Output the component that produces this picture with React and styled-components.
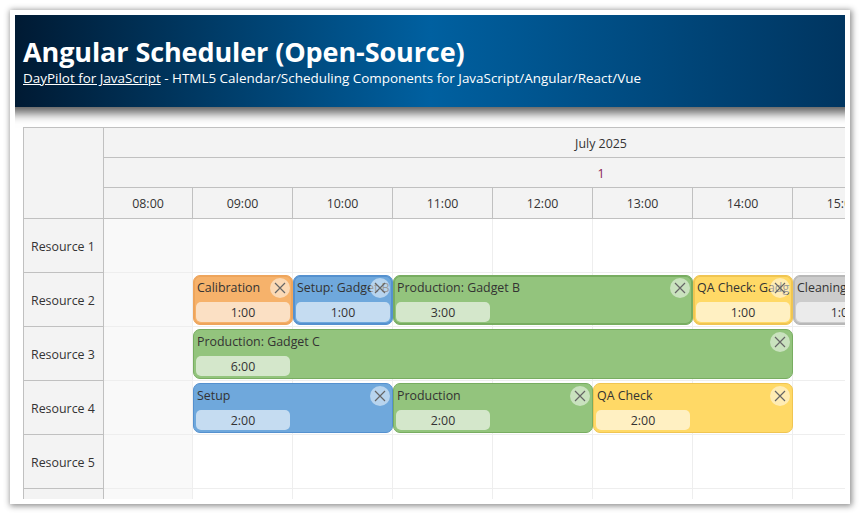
import React from "react";
import styled, { createGlobalStyle } from "styled-components";

const Global = createGlobalStyle`
  html, body { margin: 0; padding: 0; background: #fff; width: 860px; height: 514px; overflow: hidden; }
  * { box-sizing: border-box; }
`;

const Page = styled.div`
  width: 860px;
  height: 514px;
  padding: 10px;
  font-family: "Open Sans", "Noto Sans", "Liberation Sans", sans-serif;
`;

const Frame = styled.div`
  width: 840px;
  height: 494px;
  padding: 5px;
  background: #fff;
  box-shadow: 1px 1px 6px 1px rgba(0, 0, 0, 0.45);
`;

const Viewport = styled.div`
  width: 830px;
  height: 484px;
  overflow: hidden;
`;

const Header = styled.header`
  height: 92px;
  padding: 22px 8px 0;
  color: #fff;
  background: linear-gradient(90deg, #001a33 0%, #0060a0 50%, #003560 100%);
  box-shadow: 0 -4px 10px 10px rgba(0, 0, 0, 0.65);
`;

const Title = styled.h1`
  margin: 0;
  font-size: 27px;
  line-height: 30px;
  font-weight: 700;
  letter-spacing: -0.1px;
`;

const Subtitle = styled.div`
  margin-top: 2px;
  font-size: 13.45px;
  line-height: 18px;
  a { color: #fff; }
`;

const Scheduler = styled.div`
  margin: 20px 0 0 8px;
  width: 1075px;
  border-top: 1px solid #c0c0c0;
  border-left: 1px solid #c0c0c0;
  display: grid;
  grid-template-columns: 80px 1fr;
  font-size: 12.4px;
  color: #333;
`;

const Corner = styled.div`
  background: #f3f3f3;
  border-right: 1px solid #c0c0c0;
  border-bottom: 1px solid #c0c0c0;
`;

const TimeHeader = styled.div`
  display: grid;
  grid-template-rows: 30px 30px 31px;
`;

const HeaderBand = styled.div`
  display: flex;
  align-items: center;
  justify-content: center;
  padding-top: 2px;
  background: #f3f3f3;
  border-bottom: 1px solid #c0c0c0;
  color: ${(p) => p.$color || "#333"};
`;

const HourRow = styled.div`
  display: grid;
  grid-template-columns: 89px repeat(9, 100px);
`;

const HourCell = styled.div`
  display: flex;
  align-items: center;
  justify-content: center;
  background: #f3f3f3;
  border-right: 1px solid #c0c0c0;
  border-bottom: 1px solid #c0c0c0;
`;

const RowHeader = styled.div`
  height: 54px;
  display: flex;
  align-items: center;
  padding: 2px 0 0 7px;
  background: #f3f3f3;
  border-right: 1px solid #c0c0c0;
  border-bottom: 1px solid #c0c0c0;
`;

const Lane = styled.div`
  height: 54px;
  display: grid;
  grid-template-columns: 89px repeat(9, 100px);
  grid-template-rows: 54px;
`;

const Cell = styled.div`
  grid-row: 1;
  grid-column: ${(p) => p.$col};
  background: ${(p) => (p.$off ? "#f9f9f9" : "#fff")};
  border-right: 1px solid #eee;
  border-bottom: 1px solid #eee;
`;

const Event = styled.div`
  grid-row: 1;
  grid-column: ${(p) => p.$col} / span ${(p) => p.$span};
  position: relative;
  margin: 2px 0;
  padding: 3px 2px 0;
  z-index: 1;
  min-width: 0;
  border-radius: 7px;
  border: 1px solid ${(p) => p.$border};
  background: ${(p) => p.$bg};
  box-shadow: ${(p) => (p.$thick ? `inset 0 0 0 1px ${p.$border}` : "none")};
`;

const EventText = styled.div`
  height: 18px;
  line-height: 18px;
  white-space: nowrap;
  overflow: hidden;
  padding-left: 1px;
`;

const Bar = styled.div`
  width: 94px;
  height: 20px;
  margin-top: 5px;
  border-radius: 5px;
  background: rgba(255, 255, 255, 0.6);
  display: flex;
  align-items: center;
  justify-content: center;
`;

const Delete = styled.div`
  position: absolute;
  top: 2px;
  right: 2px;
  width: 20px;
  height: 20px;
  border-radius: 50%;
  background: rgba(255, 255, 255, 0.5);
  display: flex;
  align-items: center;
  justify-content: center;
  svg { display: block; }
`;

const palette = {
  orange: { bg: "#f6b26b", border: "#eea55c" },
  blue: { bg: "#6fa8dc", border: "#5591cf" },
  green: { bg: "#93c47d", border: "#78ad61" },
  yellow: { bg: "#ffd966", border: "#f0c552" },
  gray: { bg: "#cccccc", border: "#b8b8b8" },
};

const X = () => (
  <svg width="12" height="12" viewBox="0 0 12 12">
    <path d="M1 1L11 11M11 1L1 11" stroke="#666" strokeWidth="1.2" fill="none" />
  </svg>
);

const rows = [
  { name: "Resource 1", events: [] },
  {
    name: "Resource 2",
    events: [
      { col: 2, span: 1, c: "orange", t: "Calibration", d: "1:00", thick: true },
      { col: 3, span: 1, c: "blue", t: "Setup: Gadget B", d: "1:00", thick: true },
      { col: 4, span: 3, c: "green", t: "Production: Gadget B", d: "3:00", thick: true },
      { col: 7, span: 1, c: "yellow", t: "QA Check: Gadget B", d: "1:00", thick: true },
      { col: 8, span: 1, c: "gray", t: "Cleaning: Gadget B", d: "1:00", thick: true },
    ],
  },
  { name: "Resource 3", events: [{ col: 2, span: 6, c: "green", t: "Production: Gadget C", d: "6:00" }] },
  {
    name: "Resource 4",
    events: [
      { col: 2, span: 2, c: "blue", t: "Setup", d: "2:00" },
      { col: 4, span: 2, c: "green", t: "Production", d: "2:00" },
      { col: 6, span: 2, c: "yellow", t: "QA Check", d: "2:00" },
    ],
  },
  { name: "Resource 5", events: [] },
  { name: "Resource 6", events: [] },
];

const hours = ["08:00", "09:00", "10:00", "11:00", "12:00", "13:00", "14:00", "15:00", "16:00", "17:00"];

export default function App() {
  return (
    <Page>
      <Global />
      <Frame>
        <Viewport>
          <Header>
            <Title>Angular Scheduler (Open-Source)</Title>
            <Subtitle>
              <a href="#">DayPilot for JavaScript</a> - HTML5 Calendar/Scheduling Components for JavaScript/Angular/React/Vue
            </Subtitle>
          </Header>
          <Scheduler>
            <Corner />
            <TimeHeader>
              <HeaderBand>July 2025</HeaderBand>
              <HeaderBand $color="#8a1a50">1</HeaderBand>
              <HourRow>
                {hours.map((h) => (
                  <HourCell key={h}>{h}</HourCell>
                ))}
              </HourRow>
            </TimeHeader>
            {rows.map((r) => (
              <React.Fragment key={r.name}>
                <RowHeader>{r.name}</RowHeader>
                <Lane>
                  {hours.map((h, i) => (
                    <Cell key={h} $col={i + 1} $off={i === 0} />
                  ))}
                  {r.events.map((e) => (
                    <Event key={e.t} $col={e.col} $span={e.span} $bg={palette[e.c].bg} $border={palette[e.c].border} $thick={e.thick}>
                      <EventText>{e.t}</EventText>
                      <Bar>{e.d}</Bar>
                      <Delete>
                        <X />
                      </Delete>
                    </Event>
                  ))}
                </Lane>
              </React.Fragment>
            ))}
          </Scheduler>
        </Viewport>
      </Frame>
    </Page>
  );
}
